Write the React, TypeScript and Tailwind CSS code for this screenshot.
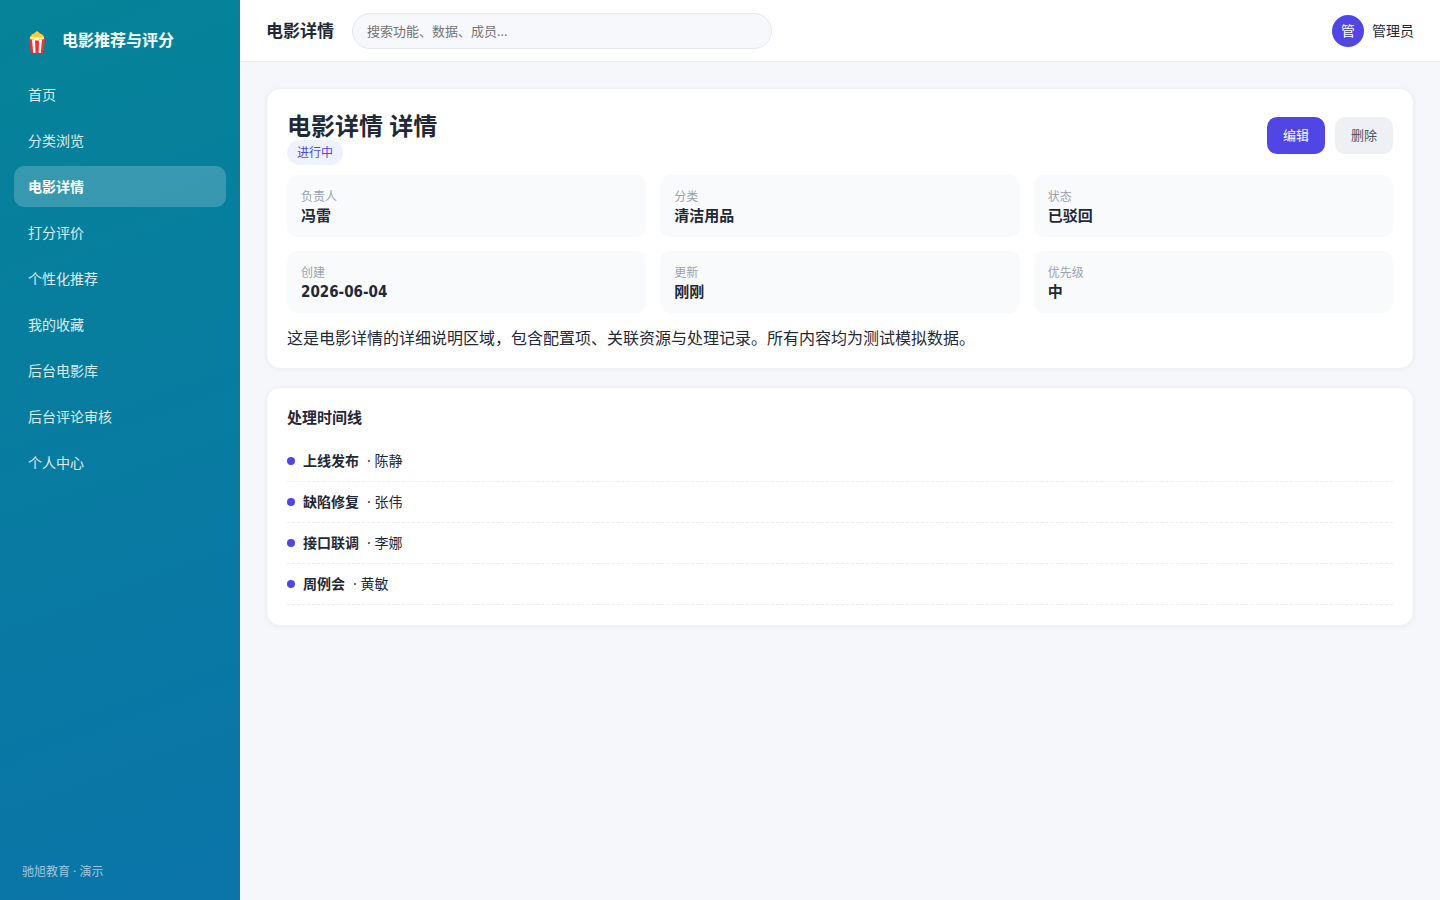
import React from "react";

const navItems = [
  "首页",
  "分类浏览",
  "电影详情",
  "打分评价",
  "个性化推荐",
  "我的收藏",
  "后台电影库",
  "后台评论审核",
  "个人中心",
];

const fields = [
  { label: "负责人", value: "冯雷" },
  { label: "分类", value: "清洁用品" },
  { label: "状态", value: "已驳回" },
  { label: "创建", value: "2026-06-04" },
  { label: "更新", value: "刚刚" },
  { label: "优先级", value: "中" },
];

const timeline = [
  { title: "上线发布", person: "陈静" },
  { title: "缺陷修复", person: "张伟" },
  { title: "接口联调", person: "李娜" },
  { title: "周例会", person: "黄敏" },
];

function PopcornIcon() {
  return (
    <svg className="h-7 w-[22px] shrink-0" viewBox="0 0 22 28" aria-hidden="true">
      {/* popcorn */}
      <path
        d="M4 14V10.5L5.5 9.5V8.5L8 7.5 9 6.5 11 5 13 6.5 14 7.5 16.5 8.5 17 9.5 18 10.5V14Z"
        fill="#ffc83d"
      />
      <path d="M4 11.5 6.5 10.5 9 11.5 11 10.8 14 11.5 16 10.5 18 11.5V13.5H4Z" fill="#fff176" />
      {/* striped bucket */}
      <path d="M3 12.5 5 13.5H17L19 12.5 18 21 17 27H5L4 21Z" fill="#f92f2f" />
      <path d="M6 13.5H9L9.5 27H7.2Z" fill="#fff" />
      <path d="M13 13.5H16L14.8 27H12.7Z" fill="#fff" />
      <path d="M8 12.5H13V14.5H8Z" fill="#fff" />
    </svg>
  );
}

function Sidebar() {
  return (
    <aside className="flex w-60 shrink-0 flex-col bg-[linear-gradient(160deg,#058398,#0b74a9)] px-[14px] py-[18px] text-white">
      <div className="mb-3 flex items-center gap-[14px] px-3 py-2">
        <PopcornIcon />
        <span className="text-base leading-6 font-bold">电影推荐与评分</span>
      </div>
      <nav className="flex flex-col gap-[5px]">
        {navItems.map((item) => (
          <a
            key={item}
            href="#"
            className={
              item === "电影详情"
                ? "rounded-[10px] bg-white/20 px-[14px] py-[11px] text-sm leading-[19px] font-bold text-white"
                : "rounded-[10px] px-[14px] py-[11px] text-sm leading-[19px] text-white/85"
            }
          >
            {item}
          </a>
        ))}
      </nav>
      <div className="mt-auto px-2 text-xs leading-5 text-white/60">驰旭教育 · 演示</div>
    </aside>
  );
}

function Header() {
  return (
    <header className="flex items-center gap-[18px] border-b border-[#eceef3] bg-white px-[26px] pt-[13px] pb-3">
      <div className="text-[17px] leading-6 font-bold">电影详情</div>
      <input
        type="search"
        aria-label="搜索"
        placeholder="搜索功能、数据、成员..."
        className="h-9 w-full max-w-[420px] rounded-full border border-[#e5e7ef] bg-[#f7f8fc] px-[14px] text-[13px] placeholder:text-[#757575]"
      />
      <div className="ml-auto flex shrink-0 items-center gap-2 text-sm">
        <span className="flex h-8 w-8 items-center justify-center rounded-full bg-[#4f46e5] text-white">
          管
        </span>
        <span>管理员</span>
      </div>
    </header>
  );
}

export default function App() {
  return (
    <div className="flex min-h-screen bg-[#f5f7fb] font-['Noto_Sans','Noto_Sans_CJK_SC',sans-serif] text-[#1f2937]">
      <Sidebar />
      <div className="min-w-0 flex-1">
        <Header />
        <main className="flex flex-col gap-[18px] p-[26px]">
          <section className="rounded-[14px] border border-[#f0f1f6] bg-white p-5 shadow-[0_1px_4px_rgba(30,41,59,0.05)]">
            <div className="mb-[13px] flex items-center justify-between">
              <div>
                <h1 className="text-2xl leading-[34px] font-bold">电影详情 详情</h1>
                <div className="text-xs leading-[19px]">
                  <span className="rounded-full bg-[#eef2ff] px-[10px] py-1 text-[#4f46e5]">
                    进行中
                  </span>
                </div>
              </div>
              <div className="flex gap-[10px] text-[13px] leading-[19px]">
                <button type="button" className="rounded-[10px] bg-[#4f46e5] px-4 py-[9px] text-white">
                  编辑
                </button>
                <button type="button" className="rounded-[10px] bg-[#eef0f4] px-4 py-[9px] text-[#475569]">
                  删除
                </button>
              </div>
            </div>
            <dl className="grid grid-cols-3 gap-[14px]">
              {fields.map((field) => (
                <div key={field.label} className="rounded-[10px] bg-[#f9fafc] px-[14px] pt-[13px] pb-[11px]">
                  <dt className="text-xs leading-[18px] text-[#9ca3af]">{field.label}</dt>
                  <dd className="font-['DejaVu_Sans_Condensed','Noto_Sans_CJK_SC',sans-serif] text-[15px] leading-5 font-bold">
                    {field.value}
                  </dd>
                </div>
              ))}
            </dl>
            <p className="mt-4 text-base leading-[19px]">
              这是电影详情的详细说明区域，包含配置项、关联资源与处理记录。所有内容均为测试模拟数据。
            </p>
          </section>

          <section className="rounded-[14px] border border-[#f0f1f6] bg-white p-5 shadow-[0_1px_4px_rgba(30,41,59,0.05)]">
            <h2 className="mb-[15px] text-[15px] leading-[18px] font-bold">处理时间线</h2>
            <ul>
              {timeline.map((entry) => (
                <li
                  key={entry.title}
                  className="flex items-center gap-2 border-b border-dashed border-[#eceef3] py-[10px] text-sm"
                >
                  <span className="h-2 w-2 rounded-full bg-[#4f46e5]" />
                  <b>{entry.title}</b>
                  <span>· {entry.person}</span>
                </li>
              ))}
            </ul>
          </section>
        </main>
      </div>
    </div>
  );
}
